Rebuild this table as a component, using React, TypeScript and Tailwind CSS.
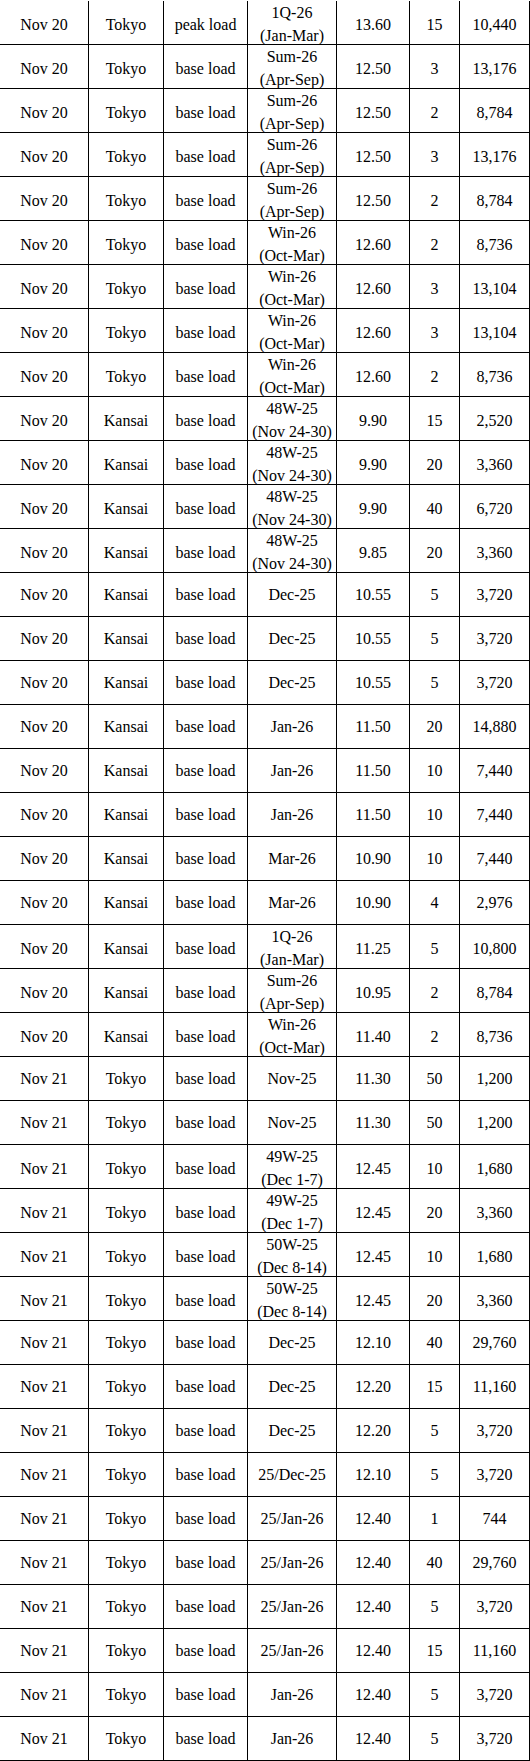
import React from "react";

type Row = [string, string, string, string, string, string, string];

const rows: Row[] = [
  ["Nov 20", "Tokyo", "peak load", "1Q-26\n(Jan-Mar)", "13.60", "15", "10,440"],
  ["Nov 20", "Tokyo", "base load", "Sum-26\n(Apr-Sep)", "12.50", "3", "13,176"],
  ["Nov 20", "Tokyo", "base load", "Sum-26\n(Apr-Sep)", "12.50", "2", "8,784"],
  ["Nov 20", "Tokyo", "base load", "Sum-26\n(Apr-Sep)", "12.50", "3", "13,176"],
  ["Nov 20", "Tokyo", "base load", "Sum-26\n(Apr-Sep)", "12.50", "2", "8,784"],
  ["Nov 20", "Tokyo", "base load", "Win-26\n(Oct-Mar)", "12.60", "2", "8,736"],
  ["Nov 20", "Tokyo", "base load", "Win-26\n(Oct-Mar)", "12.60", "3", "13,104"],
  ["Nov 20", "Tokyo", "base load", "Win-26\n(Oct-Mar)", "12.60", "3", "13,104"],
  ["Nov 20", "Tokyo", "base load", "Win-26\n(Oct-Mar)", "12.60", "2", "8,736"],
  ["Nov 20", "Kansai", "base load", "48W-25\n(Nov 24-30)", "9.90", "15", "2,520"],
  ["Nov 20", "Kansai", "base load", "48W-25\n(Nov 24-30)", "9.90", "20", "3,360"],
  ["Nov 20", "Kansai", "base load", "48W-25\n(Nov 24-30)", "9.90", "40", "6,720"],
  ["Nov 20", "Kansai", "base load", "48W-25\n(Nov 24-30)", "9.85", "20", "3,360"],
  ["Nov 20", "Kansai", "base load", "Dec-25", "10.55", "5", "3,720"],
  ["Nov 20", "Kansai", "base load", "Dec-25", "10.55", "5", "3,720"],
  ["Nov 20", "Kansai", "base load", "Dec-25", "10.55", "5", "3,720"],
  ["Nov 20", "Kansai", "base load", "Jan-26", "11.50", "20", "14,880"],
  ["Nov 20", "Kansai", "base load", "Jan-26", "11.50", "10", "7,440"],
  ["Nov 20", "Kansai", "base load", "Jan-26", "11.50", "10", "7,440"],
  ["Nov 20", "Kansai", "base load", "Mar-26", "10.90", "10", "7,440"],
  ["Nov 20", "Kansai", "base load", "Mar-26", "10.90", "4", "2,976"],
  ["Nov 20", "Kansai", "base load", "1Q-26\n(Jan-Mar)", "11.25", "5", "10,800"],
  ["Nov 20", "Kansai", "base load", "Sum-26\n(Apr-Sep)", "10.95", "2", "8,784"],
  ["Nov 20", "Kansai", "base load", "Win-26\n(Oct-Mar)", "11.40", "2", "8,736"],
  ["Nov 21", "Tokyo", "base load", "Nov-25", "11.30", "50", "1,200"],
  ["Nov 21", "Tokyo", "base load", "Nov-25", "11.30", "50", "1,200"],
  ["Nov 21", "Tokyo", "base load", "49W-25\n(Dec 1-7)", "12.45", "10", "1,680"],
  ["Nov 21", "Tokyo", "base load", "49W-25\n(Dec 1-7)", "12.45", "20", "3,360"],
  ["Nov 21", "Tokyo", "base load", "50W-25\n(Dec 8-14)", "12.45", "10", "1,680"],
  ["Nov 21", "Tokyo", "base load", "50W-25\n(Dec 8-14)", "12.45", "20", "3,360"],
  ["Nov 21", "Tokyo", "base load", "Dec-25", "12.10", "40", "29,760"],
  ["Nov 21", "Tokyo", "base load", "Dec-25", "12.20", "15", "11,160"],
  ["Nov 21", "Tokyo", "base load", "Dec-25", "12.20", "5", "3,720"],
  ["Nov 21", "Tokyo", "base load", "25/Dec-25", "12.10", "5", "3,720"],
  ["Nov 21", "Tokyo", "base load", "25/Jan-26", "12.40", "1", "744"],
  ["Nov 21", "Tokyo", "base load", "25/Jan-26", "12.40", "40", "29,760"],
  ["Nov 21", "Tokyo", "base load", "25/Jan-26", "12.40", "5", "3,720"],
  ["Nov 21", "Tokyo", "base load", "25/Jan-26", "12.40", "15", "11,160"],
  ["Nov 21", "Tokyo", "base load", "Jan-26", "12.40", "5", "3,720"],
  ["Nov 21", "Tokyo", "base load", "Jan-26", "12.40", "5", "3,720"],
];

export default function App() {
  return (
    <div className="w-[530px] bg-white pt-px font-['Liberation_Serif','Times_New_Roman',serif] text-[16px] leading-[23px] text-black">
      {rows.map((r, i) => (
        <div
          key={i}
          className="grid h-[44px] grid-cols-[89px_75px_84px_89px_73px_50px_70px] border-b border-black"
        >
          {r.map((c, j) => (
            <div
              key={j}
              className="flex flex-col items-center justify-center whitespace-nowrap border-r border-black text-center"
            >
              {c.split("\n").map((line, k) => (
                <span key={k}>{line}</span>
              ))}
            </div>
          ))}
        </div>
      ))}
    </div>
  );
}
